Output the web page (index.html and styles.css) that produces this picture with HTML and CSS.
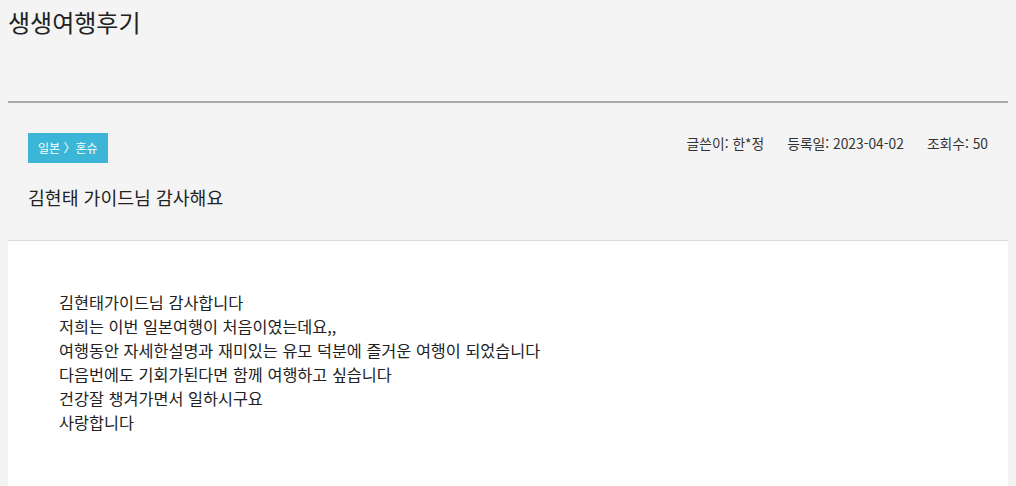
FILE: index.html
```html
<!DOCTYPE html>
<html lang="ko">
<head>
	<meta charset="UTF-8">
	<title>생생여행후기</title>
	<link rel="stylesheet" href="styles.css">
</head>
<body>
	<div class="page-head">
		<h1 class="page-title">생생여행후기</h1>
	</div>
	<div class="post-head">
		<div class="post-top">
			<div class="cate">일본 〉혼슈</div>
			<ul class="meta">
				<li>글쓴이: 한*정</li>
				<li>등록일: 2023-04-02</li>
				<li>조회수: 50</li>
			</ul>
		</div>
		<div class="post-title">김현태 가이드님 감사해요</div>
	</div>
	<div class="post-body">
		<p>김현태가이드님 감사합니다</p>
		<p>저희는 이번 일본여행이 처음이였는데요,,</p>
		<p>여행동안 자세한설명과 재미있는 유모 덕분에 즐거운 여행이 되었습니다</p>
		<p>다음번에도 기회가된다면 함께 여행하고 싶습니다</p>
		<p>건강잘 챙겨가면서 일하시구요</p>
		<p>사랑합니다</p>
	</div>
</body>
</html>
```

FILE: styles.css
```css
body,ul,li,p,h1{
	margin: 0;
	padding: 0;
	list-style: none;
}
body{
	margin: 0 8px;
	background: #f4f4f4;
	color: #222;
	font-family: "Noto Sans CJK KR", "Noto Sans", sans-serif;
}
.page-head{
	height: 101px;
	border-bottom: 2px solid #a8a8a8;
}
.page-title{
	padding-top: 5px;
	font-size: 24px;
	font-weight: normal;
	line-height: 34px;
	color: #222;
}
.post-head{
	padding: 30px 20px 30px 20px;
	border-bottom: 1px solid #dcdcdc;
}
.post-top{
	display: flex;
	justify-content: space-between;
	align-items: flex-start;
}
.cate{
	height: 30px;
	line-height: 30px;
	padding: 0 10px;
	background: #3cb6d6;
	color: #fff;
	font-size: 12px;
}
.meta{
	display: flex;
	gap: 23px;
	font-size: 13.8px;
	line-height: 20px;
	color: #333;
}
.post-title{
	margin-top: 21px;
	font-size: 18.3px;
	line-height: 26px;
	color: #222;
}
.post-body{
	min-height: 147px;
	padding: 49px 51px;
	background: #fff;
	font-size: 16.3px;
	line-height: 24px;
	color: #222;
}
```
